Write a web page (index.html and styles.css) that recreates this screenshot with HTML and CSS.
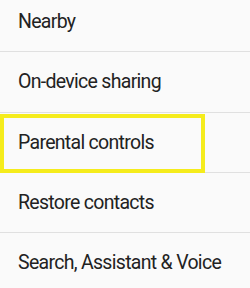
FILE: index.html
```html
<!DOCTYPE html>
<html lang="en">
<head>
  <meta charset="UTF-8">
  <title>Settings</title>
  <link rel="stylesheet" href="styles.css">
</head>
<body>
  <ul class="settings-list">
    <li class="item">Nearby</li>
    <li class="item">On-device sharing</li>
    <li class="item highlighted">Parental controls</li>
    <li class="item">Restore contacts</li>
    <li class="item">Search, Assistant &amp; Voice</li>
  </ul>
</body>
</html>
```

FILE: styles.css
```css
body {
  margin: 0;
  background-color: #fafafa;
  font-family: Roboto, 'Noto Sans', sans-serif;
  color: #222;
  overflow: hidden;
}

.settings-list {
  list-style: none;
  margin: -8px 0 0 0;
  padding: 0;
}

.item {
  position: relative;
  display: flex;
  align-items: center;
  height: 59.33px;
  padding-left: 18px;
  font-size: 19.5px;
  letter-spacing: -0.7px;
  border-bottom: 1px solid #e0e0e0;
}

.highlighted::after {
  content: "";
  position: absolute;
  left: 0;
  top: 1px;
  width: 205px;
  height: 59px;
  box-sizing: border-box;
  border: 4px solid #f5ec1c;
}
```
